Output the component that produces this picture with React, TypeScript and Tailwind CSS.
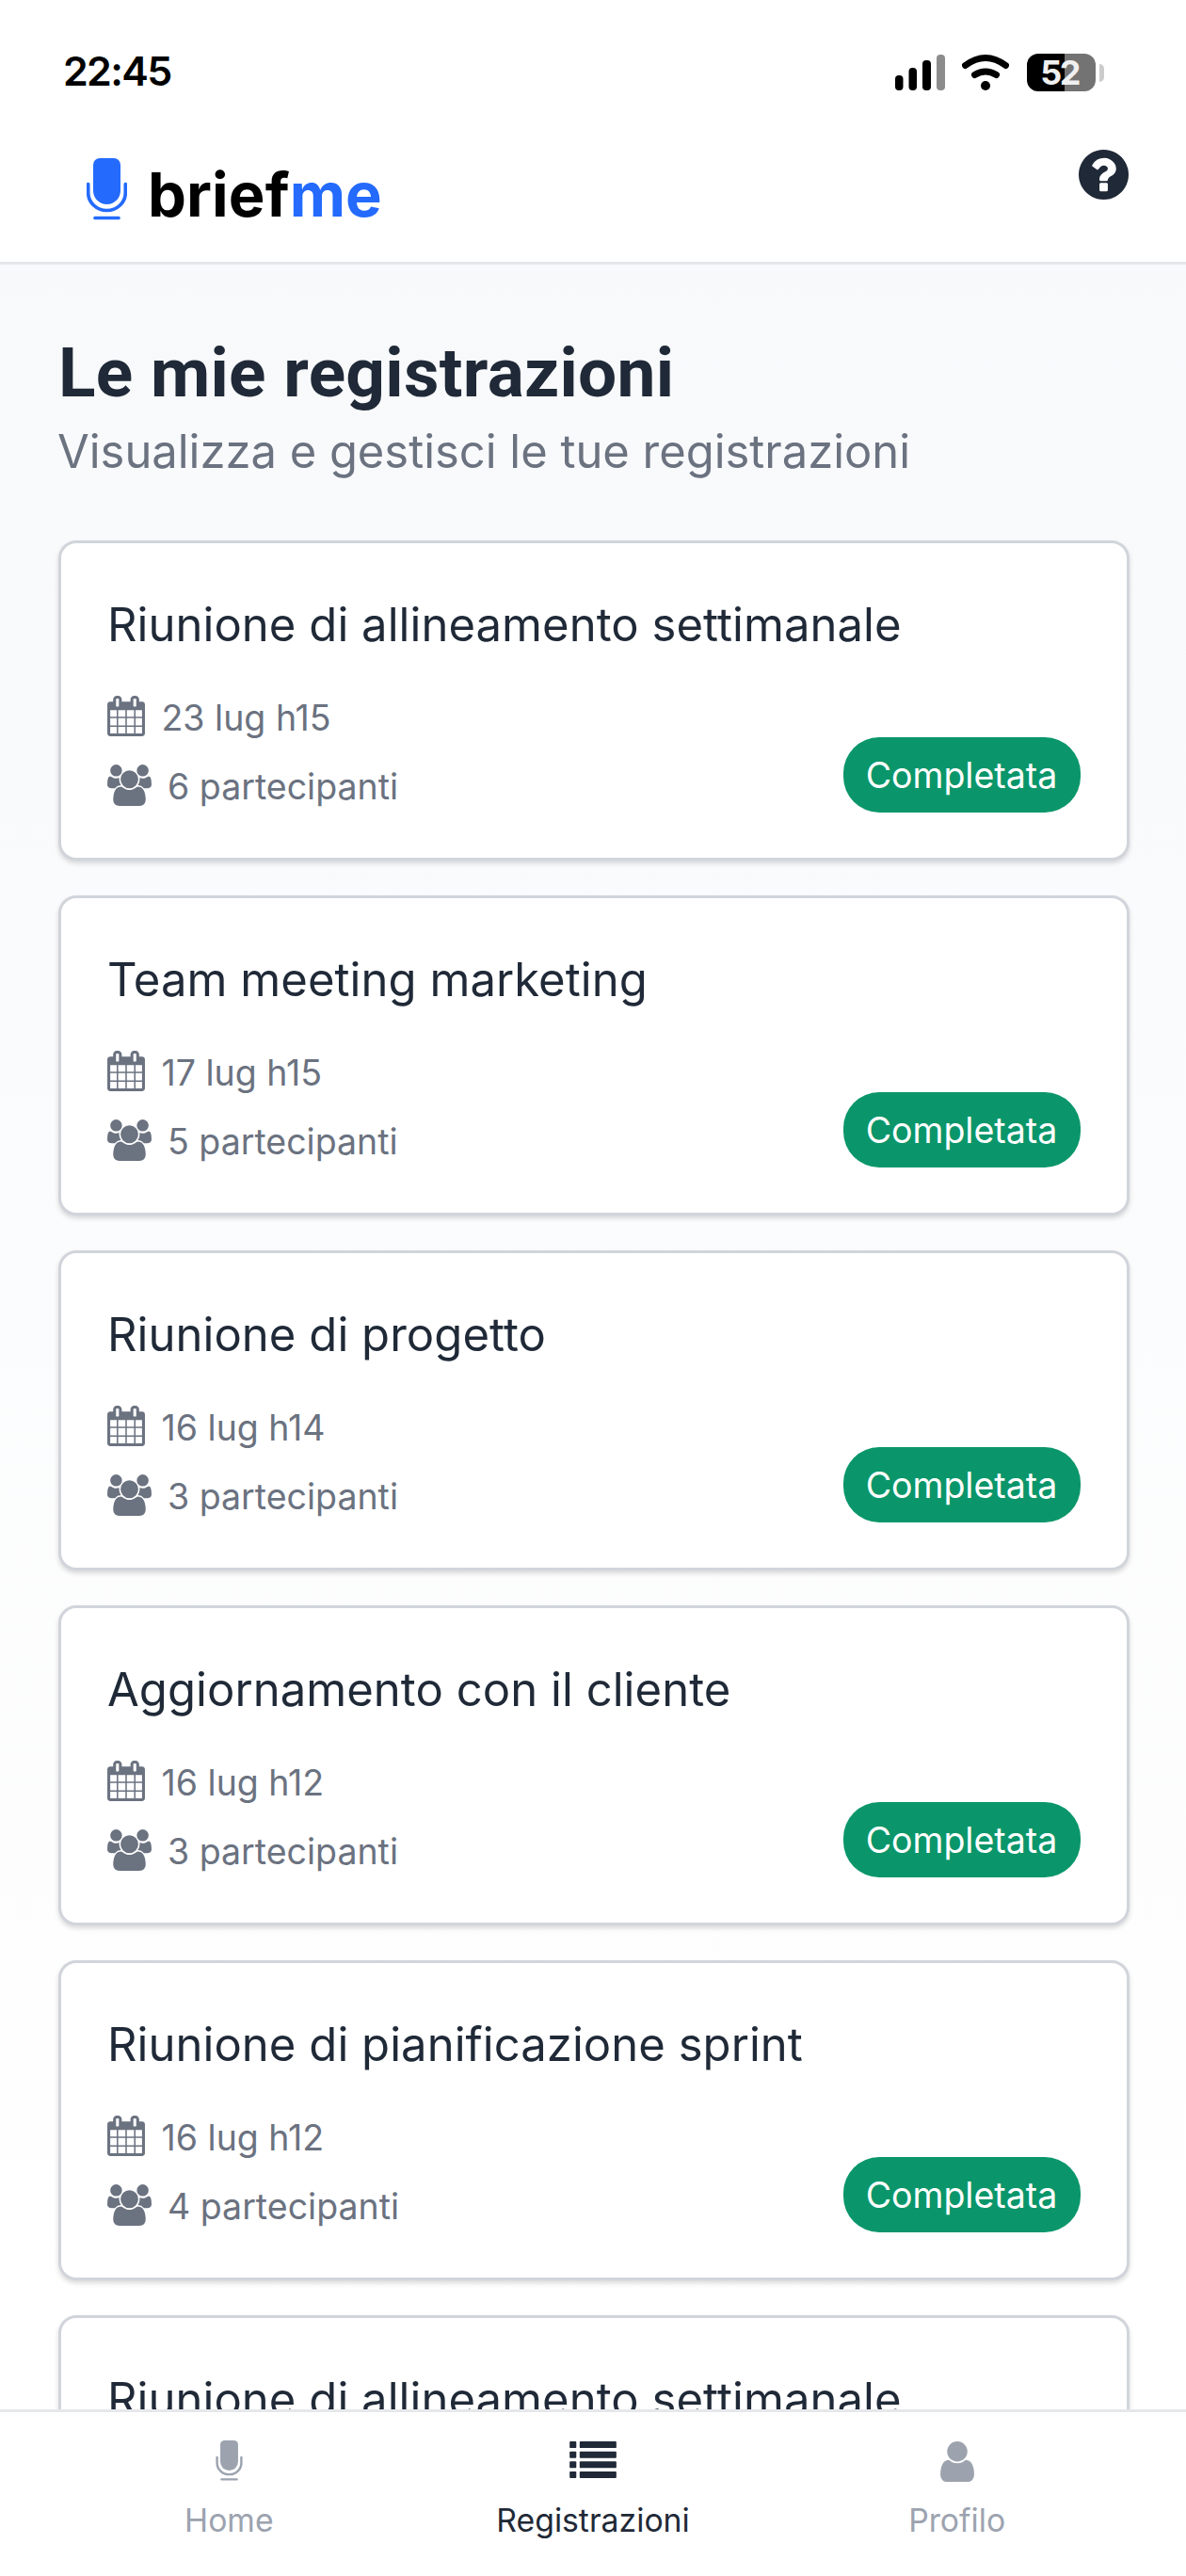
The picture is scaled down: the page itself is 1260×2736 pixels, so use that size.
import type { ReactNode } from 'react'

interface Recording {
  title: string
  date: string
  participants: number
}

const recordings: Recording[] = [
  { title: 'Riunione di allineamento settimanale', date: '23 lug h15', participants: 6 },
  { title: 'Team meeting marketing', date: '17 lug h15', participants: 5 },
  { title: 'Riunione di progetto', date: '16 lug h14', participants: 3 },
  { title: 'Aggiornamento con il cliente', date: '16 lug h12', participants: 3 },
  { title: 'Riunione di pianificazione sprint', date: '16 lug h12', participants: 4 },
  { title: 'Riunione di allineamento settimanale', date: '15 lug h15', participants: 6 },
]

function MicIcon({ className }: { className: string }) {
  return (
    <svg viewBox="0 0 43 66" className={className}>
      <path d="M14 0h15a7 7 0 0 1 7 7v27.500a14.500 14.500 0 0 1-29 0V7a7 7 0 0 1 7-7z" fill="currentColor" />
      <path
        d="M1.700 27.700v9a19.800 18.800 0 0 0 39.600 0v-9M9 63.500h25"
        fill="none"
        stroke="currentColor"
        strokeWidth="3.700"
        strokeLinecap="round"
      />
    </svg>
  )
}

function QuestionIcon({ className }: { className: string }) {
  return (
    <svg viewBox="128 128 1536 1536" className={className} fill="currentColor">
      <path d="M1024 1376v-192q0-14-9-23t-23-9h-192q-14 0-23 9t-9 23v192q0 14 9 23t23 9h192q14 0 23-9t9-23zm256-672q0-88-55.500-163t-138.500-116-170-41q-243 0-371 213-15 24 8 42l132 100q7 6 19 6 16 0 25-12 53-68 86-92 34-24 86-24 48 0 85.500 26t37.500 59q0 38-20 61t-68 45q-63 28-115.500 86.500t-52.500 125.500v36q0 14 9 23t23 9h192q14 0 23-9t9-23q0-19 21.500-49.500t54.500-49.500q32-18 49-28.500t46-35 44.500-48 28-60.500 12.500-81zm384 192q0 209-103 385.500t-279.500 279.500-385.500 103-385.500-103-279.500-279.500-103-385.500 103-385.500 279.500-279.500 385.500-103 385.500 103 279.500 279.500 103 385.500z" />
    </svg>
  )
}

function CalendarIcon({ className }: { className: string }) {
  return (
    <svg viewBox="64 0 1664 1792" className={className} fill="currentColor">
      <path d="M192 1664h288v-288h-288v288zm352 0h320v-288h-320v288zm-352-352h288v-320h-288v320zm352 0h320v-320h-320v320zm-352-384h288v-288h-288v288zm736 736h320v-288h-320v288zm-384-736h320v-288h-320v288zm768 736h288v-288h-288v288zm-384-352h320v-320h-320v320zm-352-864v-288q0-13-9.500-22.500t-22.500-9.500h-64q-13 0-22.500 9.500t-9.500 22.500v288q0 13 9.500 22.500t22.500 9.500h64q13 0 22.500-9.500t9.500-22.500zm736 864h288v-320h-288v320zm-384-384h320v-288h-320v288zm384 0h288v-288h-288v288zm32-480v-288q0-13-9.500-22.500t-22.500-9.500h-64q-13 0-22.500 9.500t-9.500 22.500v288q0 13 9.500 22.500t22.500 9.500h64q13 0 22.500-9.500t9.500-22.500zm384-64v1280q0 52-38 90t-90 38h-1408q-52 0-90-38t-38-90v-1280q0-52 38-90t90-38h128v-96q0-66 47-113t113-47h64q66 0 113 47t47 113v96h384v-96q0-66 47-113t113-47h64q66 0 113 47t47 113v96h128q52 0 90 38t38 90z" />
    </svg>
  )
}

function UsersIcon({ className }: { className: string }) {
  return (
    <svg viewBox="0 0 1920 1792" className={className} fill="currentColor">
      <path d="M593 896q-162 5-265 128h-134q-82 0-138-40.500t-56-118.500q0-353 124-353 6 0 43.500 21t97.500 42.500 119 21.500q67 0 133-23-5 37-5 66 0 139 81 256zm1071 637q0 120-73 189.500t-194 69.500h-874q-121 0-194-69.500t-73-189.500q0-53 3.500-103.500t14-109 26.500-108.500 43-97.500 62-81 85.500-53.500 111.500-20q10 0 43 21.500t73 48 107 48 135 21.500 135-21.500 107-48 73-48 43-21.500q61 0 111.500 20t85.500 53.500 62 81 43 97.500 26.500 108.500 14 109 3.500 103.500zm-1024-1277q0 106-75 181t-181 75-181-75-75-181 75-181 181-75 181 75 75 181zm704 384q0 159-112.500 271.500t-271.500 112.500-271.500-112.500-112.500-271.500 112.500-271.500 271.500-112.500 271.500 112.500 112.500 271.500zm576 225q0 78-56 118.500t-138 40.500h-134q-103-123-265-128 81-117 81-256 0-29-5-66 66 23 133 23 59 0 119-21.500t97.500-42.500 43.500-21q124 0 124 353zm-128-609q0 106-75 181t-181 75-181-75-75-181 75-181 181-75 181 75 75 181z" />
    </svg>
  )
}

function ListIcon({ className }: { className: string }) {
  return (
    <svg viewBox="0 0 1792 1408" className={className} fill="currentColor">
      {[0, 384, 768, 1152].map((y) => (
        <g key={y}>
          <rect x="0" y={y} width="256" height="256" rx="32" />
          <rect x="384" y={y} width="1408" height="256" rx="32" />
        </g>
      ))}
    </svg>
  )
}

function UserIcon({ className }: { className: string }) {
  return (
    <svg viewBox="256 128 1280 1536" className={className} fill="currentColor">
      <path d="M1536 1399q0 109-62.500 187t-150.500 78h-854q-88 0-150.500-78t-62.500-187q0-85 8.500-160.500t31.500-152 58.500-131 94-89 134.500-34.500q131 128 313 128t313-128q76 0 134.500 34.500t94 89 58.500 131 31.500 152 8.500 160.500zm-256-887q0 159-112.500 271.500t-271.500 112.500-271.500-112.500-112.500-271.500 112.500-271.500 271.500-112.500 271.500 112.500 112.500 271.500z" />
    </svg>
  )
}

function StatusBar() {
  return (
    <div className="flex h-[152px] items-start justify-between pr-[87px] pl-[67px] text-black">
      <span className="mt-[49px] text-[43px] leading-[52px] font-semibold tracking-[-1.7px]">22:45</span>
      <div className="mt-[57px] flex h-10 items-start">
        <svg viewBox="0 0 53 40" className="mr-[18px] h-10 w-[53px]">
          <rect x="0" y="23" width="8.500" height="16" rx="4" />
          <rect x="14.500" y="15" width="8.500" height="24" rx="4" />
          <rect x="29" y="7" width="9" height="32" rx="4" />
          <rect x="44" y="1" width="9" height="38" rx="4" fill="#8c8c8c" />
        </svg>
        <svg viewBox="0 0 50 40" className="mr-[19px] h-10 w-[50px]" fill="none" stroke="black" strokeLinecap="round">
          <path d="M3.500 12.500Q25-3.500 46.500 12.500" strokeWidth="7" />
          <path d="M13.500 22.500Q25 15.500 36.500 22.500" strokeWidth="7" />
          <circle cx="25" cy="34" r="5" fill="black" stroke="none" />
        </svg>
        <div className="flex h-10 w-[73px] items-center justify-center rounded-[12px] bg-linear-to-r from-black from-55% to-[#737373] to-55% pr-1 text-[36px] font-bold tracking-[-2.5px] text-[#f0f0f0]">
          52
        </div>
        <div className="mt-[11px] ml-1 h-[19px] w-[5px] rounded-r-full bg-[#cccccc]" />
      </div>
    </div>
  )
}

function Header() {
  return (
    <header className="h-[281px] shrink-0 border-b-[3px] border-[#e5e7eb] bg-white">
      <StatusBar />
      <div className="flex items-start justify-between pr-[61px] pl-[92px]">
        <div className="flex items-start">
          <MicIcon className="mt-4 h-[66px] w-[43px] text-[#246bfd]" />
          <span className="mt-[15px] ml-[22px] text-[65px] leading-[80px] font-bold tracking-[0.1px] text-black">
            brief<span className="text-[#246bfd]">me</span>
          </span>
        </div>
        <button aria-label="Aiuto" className="mt-[7px]">
          <QuestionIcon className="h-[53px] w-[53px] text-[#1f2937]" />
        </button>
      </div>
    </header>
  )
}

function RecordingCard({ title, date, participants }: Recording) {
  return (
    <article className="flex h-[340px] shrink-0 items-end justify-between rounded-[19px] border-[3px] border-[#d1d5db] bg-white pr-[49px] pb-[48px] pl-[49px] shadow-[0_3px_5px_rgba(0,0,0,0.15)]">
      <div className="flex h-[228px] flex-col text-[37.5px] leading-[46px] text-[#6b7280]">
        <h2 className="h-[104px] w-[870px] shrink-0 text-[49px] leading-[58px] tracking-[0.05px] whitespace-nowrap text-[#1f2937]">
          {title}
        </h2>
        <div className="flex h-[73px] shrink-0 items-start">
          <CalendarIcon className="h-[43px] w-10" />
          <span className="mt-px ml-[17.5px]">{date}</span>
        </div>
        <div className="flex items-start">
          <UsersIcon className="h-[44px] w-[47px]" />
          <span className="mt-px ml-[17px]">{participants} partecipanti</span>
        </div>
      </div>
      <span className="-ml-[150px] flex h-20 w-[252px] items-center justify-center rounded-[38px] bg-[#0a966a] pt-[2px] text-[37.5px] text-white">
        Completata
      </span>
    </article>
  )
}

function NavItem({ label, icon, active }: { label: string; icon: ReactNode; active?: boolean }) {
  return (
    <button
      className={
        active
          ? 'flex flex-1 flex-col items-center text-[#1f2937]'
          : 'flex flex-1 flex-col items-center text-[#9ca3af]'
      }
    >
      <span className="flex h-[64px] items-start">{icon}</span>
      <span className="text-[33.75px] leading-[42px]">{label}</span>
    </button>
  )
}

export default function App() {
  return (
    <div className="flex h-[2736px] w-[1260px] flex-col overflow-hidden bg-white font-['Inter',sans-serif]">
      <Header />
      <main className="min-h-0 flex-1 overflow-hidden bg-linear-to-b from-[#f8f9fb] to-white pr-[60.5px] pl-[62px]">
        <h1 className="mt-[72px] font-['Roboto',sans-serif] text-[73px] leading-[86px] font-bold tracking-[0.3px] text-[#1f2937]">
          Le mie registrazioni
        </h1>
        <p className="mt-[12px] ml-[-1px] text-[48.9px] leading-[58px] text-[#6b7280]">
          Visualizza e gestisci le tue registrazioni
        </p>
        <div className="mt-[65px] flex flex-col gap-[37px]">
          {recordings.map((recording, i) => (
            <RecordingCard key={i} {...recording} />
          ))}
        </div>
      </main>
      <nav className="flex h-[177px] shrink-0 border-t-[3px] border-[#e5e7eb] bg-white px-[50px] pt-[30px]">
        <NavItem label="Home" icon={<MicIcon className="h-[43px] w-[29px]" />} />
        <NavItem label="Registrazioni" active icon={<ListIcon className="mt-px h-[39px] w-[50px]" />} />
        <NavItem label="Profilo" icon={<UserIcon className="mt-px h-[43px] w-[36px]" />} />
      </nav>
    </div>
  )
}
